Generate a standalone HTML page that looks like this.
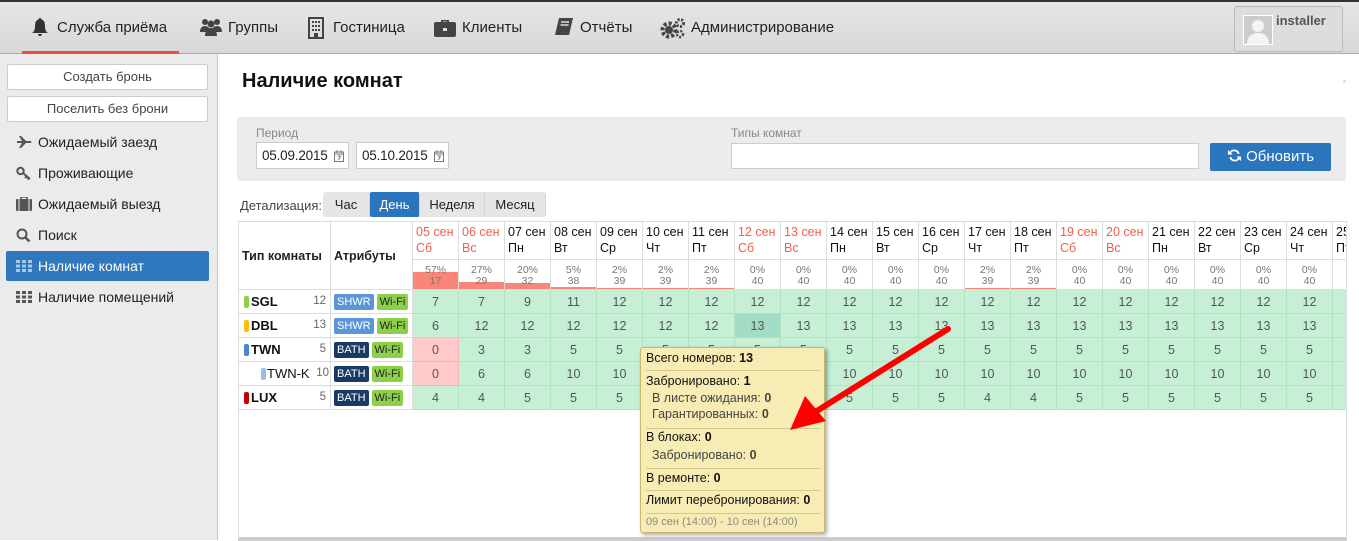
<!DOCTYPE html>
<html><head><meta charset="utf-8"><style>
*{box-sizing:border-box;margin:0;padding:0}
body{width:1359px;height:540px;overflow:hidden;background:#fff;font-family:"Liberation Sans",sans-serif;font-size:13px;color:#222;position:relative}
.top{position:absolute;left:0;top:0;width:1359px;height:54px;background:linear-gradient(#e6e6e6,#d8d8d8);border-top:2px solid #333;border-bottom:1px solid #aaa}
.nav{position:absolute;top:17px;font-size:15px;color:#222;white-space:nowrap}
.ic{position:absolute;top:15px}
.uline{position:absolute;left:22px;top:49px;width:157px;height:3px;background:#e8503e}
.user{position:absolute;left:1234px;top:4px;width:109px;height:46px;border:1px solid #bbb;border-radius:3px;background:#ddd}
.side{position:absolute;left:0;top:54px;width:218px;height:486px;background:#ebebeb;border-right:1px solid #c8c8c8}
.sbtn{position:absolute;left:7px;width:201px;height:26px;background:#fff;border:1px solid #ccc;border-radius:2px;text-align:center;line-height:24px;color:#444;font-size:13px}
.mi{position:absolute;left:6px;width:203px;height:30px;line-height:30px;padding-left:32px;font-size:14px;color:#222}
.mi.act{background:#2f78bd;color:#fff;border-radius:2px}
.mi svg{position:absolute;left:10px;top:8px}
h1{position:absolute;left:242px;top:70px;font-size:20px;font-weight:bold;color:#111}
.panel{position:absolute;left:237px;top:117px;width:1109px;height:64px;background:#ececec;border-radius:3px}
.lbl{position:absolute;color:#888;font-size:12px}
.inp{position:absolute;background:#fff;border:1px solid #ccc;height:27px;line-height:25px;padding-left:5px;font-size:13.5px;white-space:nowrap;letter-spacing:-0.2px}
.inp svg{position:absolute;right:4px;top:7px}
.bt{position:absolute;left:1210px;top:143px;width:121px;height:28px;background:#2a75bb;border-radius:2px;color:#fff;font-size:15px;line-height:28px;text-align:center}
.grp{position:absolute;top:192px;height:25px;line-height:25px;background:#e6e6e6;text-align:center;font-size:13px;border-right:1px solid #d4d4d4}
.wrap{position:absolute;left:238px;top:221px;width:1109px;height:320px;overflow:hidden;border-left:1px solid #ddd;border-right:1px solid #ddd;border-bottom:4px solid #ccc}
table{position:absolute;left:-1px;top:0;border-collapse:collapse;table-layout:fixed;width:1140px}
td{border:1px solid #ddd;padding:0;overflow:hidden;white-space:nowrap}
.d{height:38px;vertical-align:top;padding:2px 0 0 3px;line-height:16px;font-size:12.5px;color:#111}
.we{color:#f0604a}
.p{height:30px;text-align:center;font-size:10.5px;color:#777;line-height:11px;position:relative;padding-top:2px}
.p i{position:absolute;left:0;bottom:0;width:100%;background:#f8877a;z-index:0}
.p span{position:relative;z-index:1}
.c{height:24px;text-align:center;background:#c6efd5;border-color:#b3e2c3;color:#555;font-size:12.5px}
.r{background:#ffc9c9;border-color:#f2b5b5}
.h{background:#a3dcc5}
.rn{font-weight:bold;font-size:13px;color:#111;position:relative;padding-left:12px}
.rn b{position:absolute;left:5px;top:6px;width:5px;height:12px;border-radius:2px}
.n{float:right;font-weight:normal;color:#666;font-size:11.5px;margin-right:4px;margin-top:1px}
.tg{display:inline-block;font-size:11px;padding:0 3px;height:16px;line-height:16px;border-radius:2px;margin-left:3px}
.sh{background:#5b95d6;color:#fff}.ba{background:#1a3a66;color:#fff}.wf{background:#8dce4b;color:#222}
.tip{position:absolute;left:640px;top:347px;width:185px;height:186px;background:#f7edb4;border:1px solid #c8b86d;border-radius:3px;box-shadow:2px 2px 4px rgba(0,0,0,.35);font-size:12.5px;color:#111}
.tip span{position:absolute;left:5px;white-space:nowrap}
.tip .s{left:11px;color:#444}
.tip hr{position:absolute;left:5px;width:174px;border:none;border-top:1px solid #d4c78a}
</style></head><body>
<div class="top">
<svg class="ic" style="left:30px" width="20" height="20" viewBox="0 0 20 20"><path d="M10 1c1 0 1.5.8 1.5 1.5C15 3.5 15 7 15 10c0 3 1.5 5 3 6H2c1.5-1 3-3 3-6 0-3 0-6.5 3.5-7.5C8.5 1.8 9 1 10 1z M8 17h4a2 2 0 0 1-4 0z" fill="#333"/></svg>
<span class="nav" style="left:57px">Служба приёма</span>
<svg class="ic" style="left:199px" width="24" height="20" viewBox="0 0 24 20"><circle cx="6" cy="5" r="3" fill="#444"/><circle cx="18" cy="5" r="3" fill="#444"/><circle cx="12" cy="7" r="3.5" fill="#444"/><path d="M1 15c0-4 2-6 5-6s5 2 5 6zM13 15c0-4 2-6 5-6s5 2 5 6zM6 19c0-5 3-8 6-8s6 3 6 8z" fill="#444"/></svg>
<span class="nav" style="left:228px">Группы</span>
<svg class="ic" style="left:308px" width="16" height="22" viewBox="0 0 16 22"><rect x="1" y="1" width="14" height="20" fill="none" stroke="#444" stroke-width="2"/><path d="M4 4h2v2H4zM7 4h2v2H7zM10 4h2v2h-2zM4 8h2v2H4zM7 8h2v2H7zM10 8h2v2h-2zM4 12h2v2H4zM7 12h2v2H7zM10 12h2v2h-2zM6 16h4v5H6z" fill="#444"/></svg>
<span class="nav" style="left:333px">Гостиница</span>
<svg class="ic" style="left:434px;top:17px" width="22" height="18" viewBox="0 0 22 18"><path d="M7 3V1h8v2h-2V2.5H9V3z" fill="#444"/><rect x="0" y="3" width="22" height="15" rx="2" fill="#444"/><rect x="9" y="9" width="4" height="3" fill="#ddd"/></svg>
<span class="nav" style="left:462px">Клиенты</span>
<svg class="ic" style="left:554px" width="20" height="20" viewBox="0 0 20 20"><path d="M5 1h14l-4 17H1z" fill="#444"/><path d="M7 5h8M6.5 8h8" stroke="#ddd" stroke-width="1.5"/></svg>
<span class="nav" style="left:580px">Отчёты</span>
<svg class="ic" style="left:660px" width="26" height="22" viewBox="0 0 26 22"><circle cx="9" cy="13" r="6.5" fill="none" stroke="#444" stroke-width="4" stroke-dasharray="3 2"/><circle cx="9" cy="13" r="4" fill="#444"/><circle cx="20" cy="6" r="3.5" fill="none" stroke="#444" stroke-width="3" stroke-dasharray="2 1.5"/><circle cx="20" cy="17" r="3" fill="none" stroke="#444" stroke-width="2.5" stroke-dasharray="2 1.5"/></svg>
<span class="nav" style="left:691px">Администрирование</span>
<div class="uline"></div>
<div class="user"><div style="position:absolute;left:8px;top:8px;width:30px;height:30px;background:#ccc;border:1px solid #fff"><svg width="28" height="28" viewBox="0 0 28 28"><circle cx="14" cy="10" r="6" fill="#f4f4f4"/><path d="M3 28c0-8 5-11 11-11s11 3 11 11z" fill="#f4f4f4"/></svg></div><b style="position:absolute;left:41px;top:6px;color:#555;font-size:13px">installer</b></div>
</div>
<div class="side">
<div class="sbtn" style="top:10px">Создать бронь</div>
<div class="sbtn" style="top:42px">Поселить без брони</div>
<div class="mi" style="top:73px"><svg width="16" height="14" viewBox="0 0 16 14"><path d="M1 6h5L3 1h2l5 5h4c2 0 2 2 0 2h-4l-5 5H3l3-5H1z" fill="#555"/></svg>Ожидаемый заезд</div>
<div class="mi" style="top:104px"><svg width="16" height="14" viewBox="0 0 16 14"><circle cx="4.5" cy="5" r="3.2" fill="none" stroke="#555" stroke-width="2"/><path d="M7 7l7 6M11 10l-2 2M13 12l-1.5 1.5" stroke="#555" stroke-width="2"/></svg>Проживающие</div>
<div class="mi" style="top:135px"><svg width="16" height="14" viewBox="0 0 16 14"><path d="M5 2V0h6v2" fill="none" stroke="#555" stroke-width="1.5"/><rect x="0" y="2" width="16" height="12" rx="1" fill="#555"/><path d="M3 2v12M13 2v12" stroke="#ebebeb"/></svg>Ожидаемый выезд</div>
<div class="mi" style="top:166px"><svg width="16" height="14" viewBox="0 0 16 14"><circle cx="6" cy="6" r="4.5" fill="none" stroke="#555" stroke-width="2"/><path d="M9.5 9.5l4 4" stroke="#555" stroke-width="2.5"/></svg>Поиск</div>
<div class="mi act" style="top:197px"><svg width="16" height="14" viewBox="0 0 16 14"><path d="M0 1h4v3H0zM6 1h4v3H6zM12 1h4v3h-4zM0 5.5h4v3H0zM6 5.5h4v3H6zM12 5.5h4v3h-4zM0 10h4v3H0zM6 10h4v3H6zM12 10h4v3h-4z" fill="#a8c8ea"/></svg>Наличие комнат</div>
<div class="mi" style="top:228px"><svg width="16" height="14" viewBox="0 0 16 14"><path d="M0 1h4v3H0zM6 1h4v3H6zM12 1h4v3h-4zM0 5.5h4v3H0zM6 5.5h4v3H6zM12 5.5h4v3h-4zM0 10h4v3H0zM6 10h4v3H6zM12 10h4v3h-4z" fill="#555"/></svg>Наличие помещений</div>
</div>
<h1>Наличие комнат</h1>
<div style="position:absolute;left:1343px;top:80px;width:3px;height:3px;background:#ddd;border-radius:2px"></div>
<div class="panel"></div>
<span class="lbl" style="left:256px;top:126px">Период</span>
<div class="inp" style="left:256px;top:142px;width:93px">05.09.2015<svg width="10" height="12" viewBox="0 0 10 12"><rect x=".5" y="2" width="9" height="9.5" fill="none" stroke="#777"/><path d="M0 4h10M3 0v3M7 0v3" stroke="#777"/><path d="M3.5 6h3l-2 4" fill="none" stroke="#777"/></svg></div>
<div class="inp" style="left:356px;top:142px;width:93px">05.10.2015<svg width="10" height="12" viewBox="0 0 10 12"><rect x=".5" y="2" width="9" height="9.5" fill="none" stroke="#777"/><path d="M0 4h10M3 0v3M7 0v3" stroke="#777"/><path d="M3.5 6h3l-2 4" fill="none" stroke="#777"/></svg></div>
<span class="lbl" style="left:731px;top:126px">Типы комнат</span>
<div class="inp" style="left:731px;top:143px;width:468px;height:26px"></div>
<div class="bt"><svg width="15" height="15" viewBox="0 0 16 16" style="vertical-align:-2px"><path d="M13.5 6A6 6 0 0 0 3 4L1 2v5h5L4.3 5.3A4 4 0 0 1 11.5 6.5zM2.5 10A6 6 0 0 0 13 12l2 2V9h-5l1.7 1.7A4 4 0 0 1 4.5 9.5z" fill="#fff"/></svg> Обновить</div>
<span style="position:absolute;left:240px;top:198px;color:#444;font-size:13px">Детализация:</span>
<div class="grp" style="left:323px;width:47px;border-radius:3px 0 0 3px">Час</div>
<div class="grp" style="left:370px;width:50px;background:#2a75bb;color:#fff;border-radius:2px">День</div>
<div class="grp" style="left:420px;width:65px">Неделя</div>
<div class="grp" style="left:485px;width:61px;border-radius:0 3px 3px 0">Месяц</div>
<div class="wrap"><table>
<colgroup><col style="width:92px"><col style="width:82px"><col span="21" style="width:46px"></colgroup>
<tr><td rowspan="2" style="font-weight:bold;padding-left:3px;font-size:12.5px">Тип комнаты</td><td rowspan="2" style="font-weight:bold;padding-left:3px;font-size:12.5px">Атрибуты</td>
<td class="d we">05 сен<br>Сб</td><td class="d we">06 сен<br>Вс</td><td class="d">07 сен<br>Пн</td><td class="d">08 сен<br>Вт</td><td class="d">09 сен<br>Ср</td><td class="d">10 сен<br>Чт</td><td class="d">11 сен<br>Пт</td><td class="d we">12 сен<br>Сб</td><td class="d we">13 сен<br>Вс</td><td class="d">14 сен<br>Пн</td><td class="d">15 сен<br>Вт</td><td class="d">16 сен<br>Ср</td><td class="d">17 сен<br>Чт</td><td class="d">18 сен<br>Пт</td><td class="d we">19 сен<br>Сб</td><td class="d we">20 сен<br>Вс</td><td class="d">21 сен<br>Пн</td><td class="d">22 сен<br>Вт</td><td class="d">23 сен<br>Ср</td><td class="d">24 сен<br>Чт</td><td class="d">25 сен<br>Пт</td></tr>
<tr><td class="p"><i style="height:17px"></i><span>57%<br>17</span></td><td class="p"><i style="height:7px"></i><span>27%<br>29</span></td><td class="p"><i style="height:6px"></i><span>20%<br>32</span></td><td class="p"><i style="height:2px"></i><span>5%<br>38</span></td><td class="p"><i style="height:1px"></i><span>2%<br>39</span></td><td class="p"><i style="height:1px"></i><span>2%<br>39</span></td><td class="p"><i style="height:1px"></i><span>2%<br>39</span></td><td class="p"><span>0%<br>40</span></td><td class="p"><span>0%<br>40</span></td><td class="p"><span>0%<br>40</span></td><td class="p"><span>0%<br>40</span></td><td class="p"><span>0%<br>40</span></td><td class="p"><i style="height:1px"></i><span>2%<br>39</span></td><td class="p"><i style="height:1px"></i><span>2%<br>39</span></td><td class="p"><span>0%<br>40</span></td><td class="p"><span>0%<br>40</span></td><td class="p"><span>0%<br>40</span></td><td class="p"><span>0%<br>40</span></td><td class="p"><span>0%<br>40</span></td><td class="p"><span>0%<br>40</span></td><td class="p"></td></tr>
<tr><td class="rn"><b style="background:#8dce4b"></b>SGL<span class="n">12</span></td><td><span class="tg sh">SHWR</span><span class="tg wf">Wi-Fi</span></td><td class="c">7</td><td class="c">7</td><td class="c">9</td><td class="c">11</td><td class="c">12</td><td class="c">12</td><td class="c">12</td><td class="c">12</td><td class="c">12</td><td class="c">12</td><td class="c">12</td><td class="c">12</td><td class="c">12</td><td class="c">12</td><td class="c">12</td><td class="c">12</td><td class="c">12</td><td class="c">12</td><td class="c">12</td><td class="c">12</td><td class="c">12</td></tr>
<tr><td class="rn"><b style="background:#fbbd10"></b>DBL<span class="n">13</span></td><td><span class="tg sh">SHWR</span><span class="tg wf">Wi-Fi</span></td><td class="c">6</td><td class="c">12</td><td class="c">12</td><td class="c">12</td><td class="c">12</td><td class="c">12</td><td class="c">12</td><td class="c h">13</td><td class="c">13</td><td class="c">13</td><td class="c">13</td><td class="c">13</td><td class="c">13</td><td class="c">13</td><td class="c">13</td><td class="c">13</td><td class="c">13</td><td class="c">13</td><td class="c">13</td><td class="c">13</td><td class="c">13</td></tr>
<tr><td class="rn"><b style="background:#4a86d0"></b>TWN<span class="n">5</span></td><td><span class="tg ba">BATH</span><span class="tg wf">Wi-Fi</span></td><td class="c r">0</td><td class="c">3</td><td class="c">3</td><td class="c">5</td><td class="c">5</td><td class="c">5</td><td class="c">5</td><td class="c">5</td><td class="c">5</td><td class="c">5</td><td class="c">5</td><td class="c">5</td><td class="c">5</td><td class="c">5</td><td class="c">5</td><td class="c">5</td><td class="c">5</td><td class="c">5</td><td class="c">5</td><td class="c">5</td><td class="c">5</td></tr>
<tr><td class="rn" style="font-weight:normal;padding-left:28px"><b style="background:#9bbde6;left:22px"></b>TWN-K<span class="n" style="margin-right:1px">10</span></td><td><span class="tg ba">BATH</span><span class="tg wf">Wi-Fi</span></td><td class="c r">0</td><td class="c">6</td><td class="c">6</td><td class="c">10</td><td class="c">10</td><td class="c">10</td><td class="c">10</td><td class="c">10</td><td class="c">10</td><td class="c">10</td><td class="c">10</td><td class="c">10</td><td class="c">10</td><td class="c">10</td><td class="c">10</td><td class="c">10</td><td class="c">10</td><td class="c">10</td><td class="c">10</td><td class="c">10</td><td class="c">10</td></tr>
<tr><td class="rn"><b style="background:#c00000"></b>LUX<span class="n">5</span></td><td><span class="tg ba">BATH</span><span class="tg wf">Wi-Fi</span></td><td class="c">4</td><td class="c">4</td><td class="c">5</td><td class="c">5</td><td class="c">5</td><td class="c">5</td><td class="c">5</td><td class="c">5</td><td class="c">5</td><td class="c">5</td><td class="c">5</td><td class="c">5</td><td class="c">4</td><td class="c">4</td><td class="c">5</td><td class="c">5</td><td class="c">5</td><td class="c">5</td><td class="c">5</td><td class="c">5</td><td class="c">5</td></tr>
</table></div>
<div class="tip">
<span style="top:3px">Всего номеров: <b>13</b></span>
<hr style="top:22px">
<span style="top:26px">Забронировано: <b>1</b></span>
<span class="s" style="top:43px">В листе ожидания: <b>0</b></span>
<span class="s" style="top:59px">Гарантированных: <b>0</b></span>
<hr style="top:80px">
<span style="top:82px">В блоках: <b>0</b></span>
<span class="s" style="top:100px">Забронировано: <b>0</b></span>
<hr style="top:120px">
<span style="top:123px">В ремонте: <b>0</b></span>
<hr style="top:142px">
<span style="top:145px">Лимит перебронирования: <b>0</b></span>
<hr style="top:165px">
<span style="top:168px;color:#888;font-size:11px">09 сен (14:00) - 10 сен (14:00)</span>
</div>
<svg style="position:absolute;left:0;top:0" width="1359" height="540"><path d="M948 329L812 414" stroke="#f00" stroke-width="6" stroke-linecap="round"/><path d="M790 430L805 396L826 421z" fill="#f00"/></svg>
</body></html>
